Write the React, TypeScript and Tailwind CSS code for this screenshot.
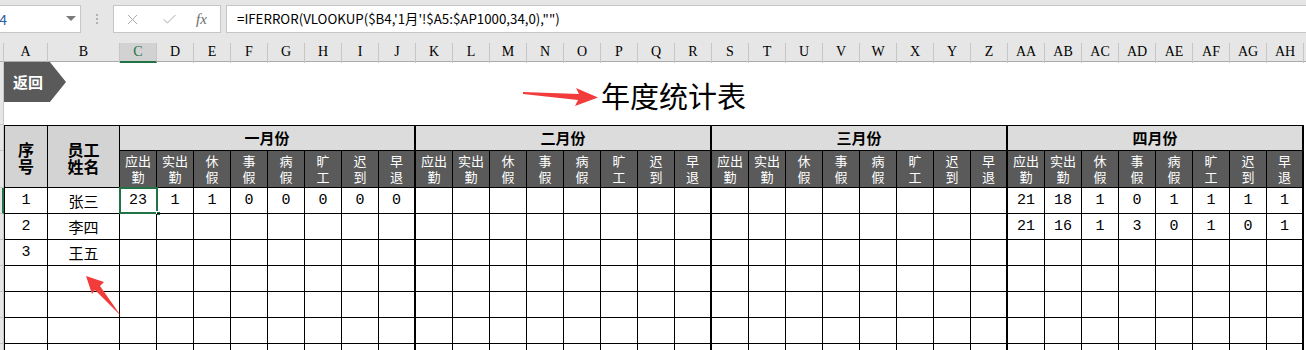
import { Check, X } from "lucide-react";

// Excel-style sheet: 年度统计表 with four month groups of attendance columns.

const MONTHS = ["一月份", "二月份", "三月份", "四月份"];
const SUBS: [string, string][] = [
  ["应出", "勤"],
  ["实出", "勤"],
  ["休", "假"],
  ["事", "假"],
  ["病", "假"],
  ["旷", "工"],
  ["迟", "到"],
  ["早", "退"],
];

const LETTERS = [
  "A", "B", "C", "D", "E", "F", "G", "H", "I", "J", "K", "L", "M", "N", "O", "P", "Q",
  "R", "S", "T", "U", "V", "W", "X", "Y", "Z", "AA", "AB", "AC", "AD", "AE", "AF", "AG", "AH",
];

type Row = { no: string; name: string; m: (number[] | null)[] };

const ROWS: Row[] = [
  { no: "1", name: "张三", m: [[23, 1, 1, 0, 0, 0, 0, 0], null, null, [21, 18, 1, 0, 1, 1, 1, 1]] },
  { no: "2", name: "李四", m: [null, null, null, [21, 16, 1, 3, 0, 1, 0, 1]] },
  { no: "3", name: "王五", m: [null, null, null, null] },
  { no: "", name: "", m: [null, null, null, null] },
  { no: "", name: "", m: [null, null, null, null] },
  { no: "", name: "", m: [null, null, null, null] },
  { no: "", name: "", m: [null, null, null, null] },
];

const CJK = { fontFamily: '"Noto Sans CJK SC", "Noto Sans", sans-serif' };
const NUM = { fontFamily: '"Liberation Mono", "Noto Sans CJK SC", monospace' };

function FormulaBar() {
  return (
    <div className="flex h-[43px] items-start gap-0 bg-[#e6e6e6] pt-[5px]">
      <div className="relative flex h-[28px] w-[81px] items-center overflow-hidden border border-l-0 border-[#c6c6c6] bg-white">
        <span className="-ml-[10px] text-[14px] text-[#2f5f9e]" style={CJK}>
          B4
        </span>
        <span className="absolute left-[66px] top-[10px] h-0 w-0 border-x-[5px] border-t-[5px] border-x-transparent border-t-[#7a7a7a]" />
      </div>
      <div className="ml-[15px] mt-[9px] flex w-[3px] flex-col gap-[2px]">
        <span className="h-[2px] w-[2px] bg-[#b0b0b0]" />
        <span className="h-[2px] w-[2px] bg-[#b0b0b0]" />
        <span className="h-[2px] w-[2px] bg-[#b0b0b0]" />
      </div>
      <div className="ml-[14px] flex h-[28px] w-[108px] items-center border border-[#c6c6c6] bg-white">
        <X size={17} strokeWidth={1.4} className="ml-[10px] text-[#a8a8a8]" />
        <Check size={17} strokeWidth={1.4} className="ml-[20px] text-[#a8a8a8]" />
        <span
          className="ml-[18px] text-[15px] italic text-[#6b6b6b]"
          style={{ fontFamily: '"Liberation Serif", serif' }}
        >
          fx
        </span>
      </div>
      <div className="ml-[5px] flex h-[28px] flex-1 items-center border border-r-0 border-[#c6c6c6] bg-white pl-[10px]">
        <span className="text-[13.3px] text-black" style={CJK}>
          =IFERROR(VLOOKUP($B4,'1月'!$A5:$AP1000,34,0),"")
        </span>
      </div>
    </div>
  );
}

function ColumnHeaders() {
  return (
    <div
      className="grid h-[19px] grid-cols-[4px_44px_72px_repeat(32,37px)_1fr] border-b border-[#ababab] bg-[#e6e6e6] text-[14px] leading-[18px] text-black"
      style={{ fontFamily: '"Liberation Serif", serif' }}
    >
      <div className="border-r border-[#c6c6c6]" />
      {LETTERS.map((l) =>
        l === "C" ? (
          <div
            key={l}
            className="border-b-2 border-r border-b-[#217346] border-r-[#c6c6c6] bg-[#d2d2d2] text-center text-[#217346]"
          >
            {l}
          </div>
        ) : (
          <div key={l} className="border-r border-[#c6c6c6] text-center">
            {l}
          </div>
        ),
      )}
      <div />
    </div>
  );
}

function Strip({ selected }: { selected?: boolean }) {
  return selected ? (
    <div className="col-start-1 border-b border-r-2 border-b-[#c6c6c6] border-r-[#217346] bg-[#e6e6e6]" />
  ) : (
    <div className="col-start-1 border-b border-r border-[#c6c6c6] bg-[#e6e6e6]" />
  );
}

export default function App() {
  return (
    <div className="relative h-[350px] w-[1306px] overflow-hidden bg-white" style={CJK}>
      <FormulaBar />
      <ColumnHeaders />

      <div className="grid grid-cols-[4px_44px_72px_repeat(32,37px)_1fr] grid-rows-[63px_26px_37px_repeat(7,26px)]">
        {/* title row */}
        <Strip />
        <div className="col-span-35 flex items-start">
          <div className="flex h-[40px] w-[62px] items-center bg-[#5a5a5a] pl-[9px] text-[15px] font-bold text-white [clip-path:polygon(0_0,74%_0,100%_50%,74%_100%,0_100%)]">
            返回
          </div>
          <div className="ml-[535px] self-center pt-[2px] text-[29px] leading-[36px] text-black">年度统计表</div>
        </div>

        {/* header row: months */}
        <Strip />
        <div className="row-span-2 flex flex-col items-center justify-center border-x border-y border-black bg-[#d3d3d3] pt-[2px] text-[16px] font-bold leading-[17px]">
          <span>序</span>
          <span>号</span>
        </div>
        <div className="row-span-2 flex flex-col items-center justify-center border-y border-r border-black bg-[#d3d3d3] pt-[2px] text-[16px] font-bold leading-[17px]">
          <span>员工</span>
          <span>姓名</span>
        </div>
        {MONTHS.map((m) => (
          <div
            key={m}
            className="col-span-8 flex items-center justify-center border-y border-r-2 border-black bg-[#dcdcdc] text-[15px] font-bold"
          >
            {m}
          </div>
        ))}
        <div />

        {/* header row: sub columns */}
        <Strip />
        {MONTHS.map((m) =>
          SUBS.map(([a, b], i) => (
            <div
              key={m + i}
              className={
                i === 7
                  ? "flex flex-col items-center justify-center border-b border-r-2 border-black bg-[#5a5a5a] text-[13px] leading-[16px] text-white"
                  : "flex flex-col items-center justify-center border-b border-r border-black bg-[#5a5a5a] text-[13px] leading-[16px] text-white"
              }
            >
              <span>{a}</span>
              <span>{b}</span>
            </div>
          )),
        )}
        <div />

        {/* data rows */}
        {ROWS.map((r, ri) => (
          <Row key={ri} row={r} first={ri === 0} />
        ))}
      </div>

      {/* red annotation arrows */}
      <svg className="pointer-events-none absolute left-0 top-0" width="1306" height="350">
        <polygon
          points="523,92 579,94 576,88 598,97.5 575,106 578,100 523,94"
          fill="#f23c3c"
        />
        <polygon
          points="86,276 104,282 100,286 121,316 95,290 92,294"
          fill="#f23c3c"
        />
      </svg>
    </div>
  );
}

function Row({ row, first }: { row: Row; first: boolean }) {
  return (
    <>
      <Strip selected={first} />
      <div className="flex items-center justify-center border-x border-b border-black pt-[2px] text-[15px]" style={NUM}>
        {row.no}
      </div>
      <div className="flex items-center justify-center border-b border-r border-black pt-[1px] text-[15px]">{row.name}</div>
      {row.m.map((vals, mi) =>
        Array.from({ length: 8 }).map((_, i) => {
          const v = vals ? String(vals[i]) : "";
          const selected = first && mi === 0 && i === 0;
          return (
            <div
              key={mi * 8 + i}
              className={
                i === 7
                  ? "relative flex items-center justify-center border-b border-r-2 border-black pt-[2px] text-[15px]"
                  : "relative flex items-center justify-center border-b border-r border-black pt-[2px] text-[15px]"
              }
              style={NUM}
            >
              {v}
              {selected && (
                <>
                  <span className="absolute -left-[1px] -top-[1px] bottom-[-1px] right-[-2px] border-2 border-[#217346]" />
                  <span className="absolute bottom-[-3px] right-[-5px] h-[5px] w-[5px] border border-white bg-[#217346]" />
                </>
              )}
            </div>
          );
        }),
      )}
      <div />
    </>
  );
}
